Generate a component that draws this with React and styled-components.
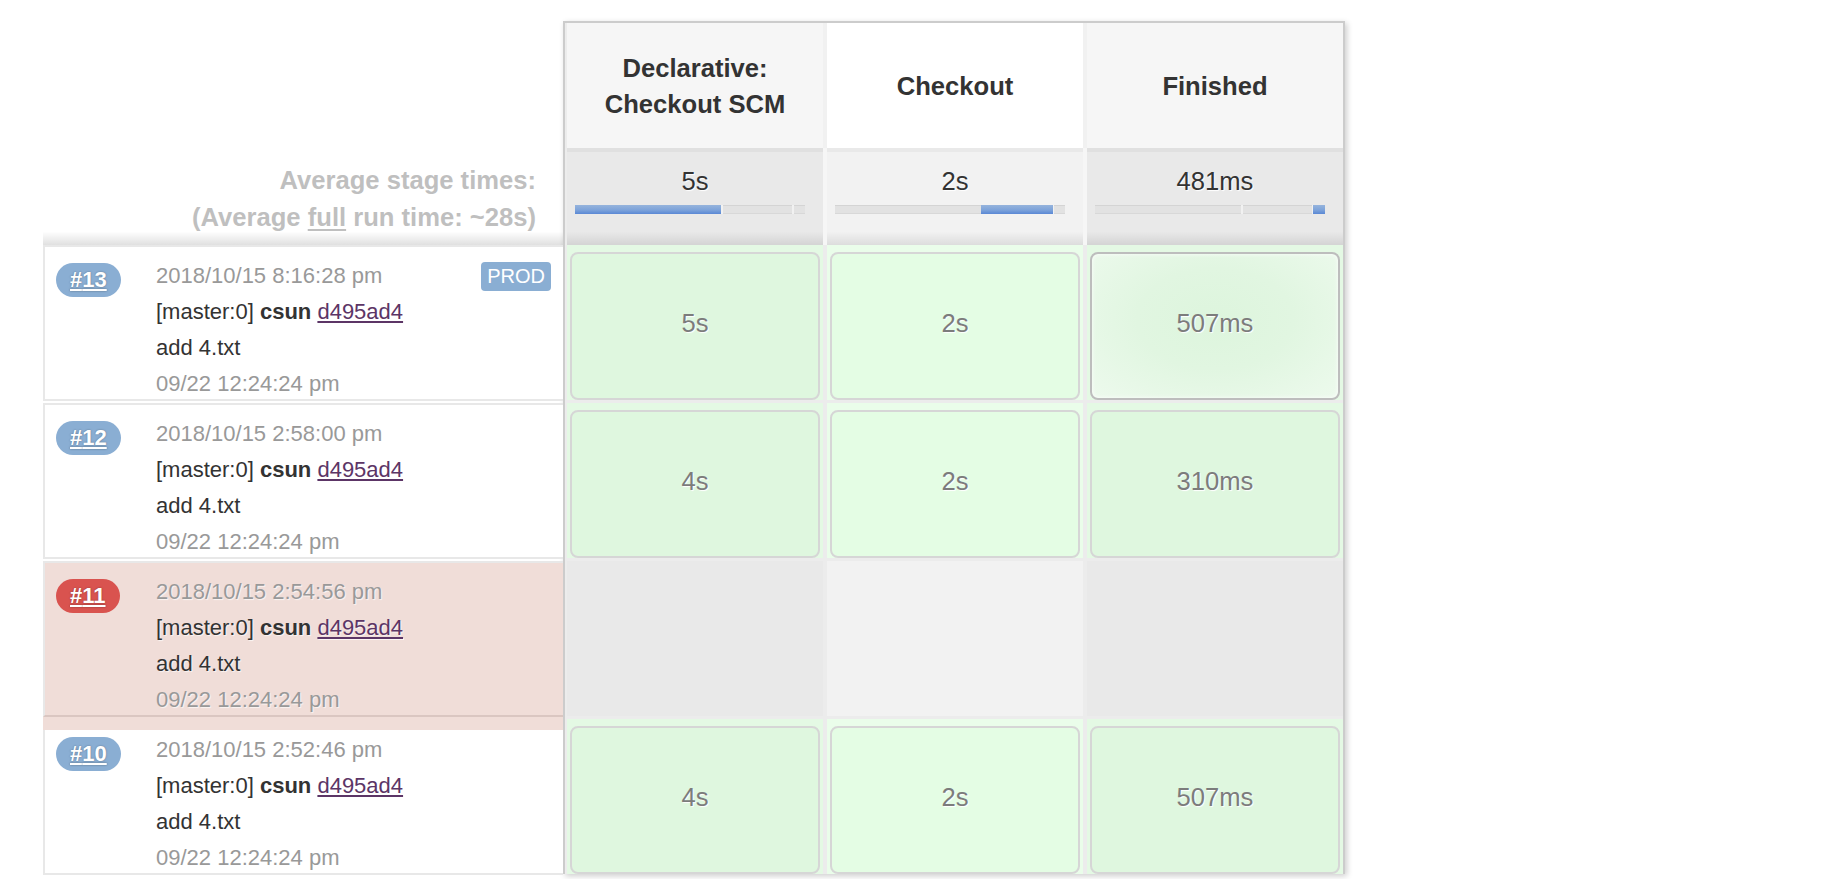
import React from 'react';
import styled, { createGlobalStyle, css } from 'styled-components';

const GlobalStyle = createGlobalStyle`
  html, body { margin: 0; padding: 0; background: #fff; overflow: hidden; }
  body { font-family: "Liberation Sans", Arial, Helvetica, sans-serif; color: #333; }
  * { box-sizing: border-box; }
`;

const Page = styled.div`
  display: flex;
  align-items: flex-start;
  padding: 21px 0 0 43px;
  height: 879px;
  overflow: hidden;
`;

/* ---------- left column ---------- */
const LeftCol = styled.div`
  flex: none;
  width: 520px;
  display: flex;
  flex-direction: column;
`;

const HeadSpacer = styled.div`
  height: 127px;
`;

const AvgLabel = styled.div`
  height: 97px;
  padding: 14px 27px 0 0;
  text-align: right;
  font-weight: bold;
  font-size: 25.6px;
  line-height: 37px;
  color: #bfbfbf;
  background: linear-gradient(to bottom, rgba(0,0,0,0) 86%, rgba(0,0,0,0.12) 100%);
  u { text-decoration-thickness: 2px; text-underline-offset: 3px; }
`;

const BuildRow = styled.div`
  position: relative;
  display: flex;
  height: 156px;
  margin-bottom: 2px;
  padding: 11px 12px 0 11px;
  border: 2px solid #e8e8e8;
  border-right: none;
  background: #fff;
  ${(p) =>
    p.$failed &&
    css`
      z-index: 1;
      background: #f0ddd8;
      border-bottom-color: #dac6c1;
      box-shadow: 0 13px 0 0 #f0ddd8;
    `}
`;

const BadgeCol = styled.div`
  flex: none;
  width: 100px;
  padding-top: 5px;
`;

const Badge = styled.a`
  display: inline-block;
  height: 34px;
  line-height: 34px;
  padding: 0 14px;
  border-radius: 17px;
  background: ${(p) => (p.$failed ? '#d9534f' : '#8aaed3')};
  color: #fff;
  font-weight: bold;
  font-size: 22px;
  text-decoration: underline;
  text-decoration-thickness: 2px;
  text-underline-offset: 2px;
  text-shadow: 0 0 2px rgba(0, 0, 0, 0.35);
  cursor: pointer;
`;

const Info = styled.div`
  flex: 1;
  display: flex;
  flex-direction: column;
  font-size: 22px;
  line-height: 36px;
  text-shadow: 1px 1px 1px rgba(255, 255, 255, 0.7);
`;

const InfoLine = styled.div`
  display: flex;
  align-items: center;
  justify-content: space-between;
  height: 36px;
  white-space: nowrap;
  color: ${(p) => (p.$muted ? '#999999' : '#333')};
`;

const Tag = styled.span`
  height: 29px;
  line-height: 29px;
  padding: 0 6px;
  border-radius: 4px;
  background: #8aaed3;
  color: #fff;
  font-size: 20px;
  text-shadow: none;
`;

const Author = styled.b`
  font-weight: bold;
`;

const CommitLink = styled.a`
  color: #5c3566;
  text-decoration: underline;
  text-underline-offset: 2px;
`;

/* ---------- stage table ---------- */
const Table = styled.div`
  flex: none;
  width: 782px;
  border: 2px solid #cccccc;
  border-bottom: none;
  padding-left: 2px;
  background: #ececec;
  box-shadow: 2px 2px 6px rgba(0, 0, 0, 0.2);
  display: flex;
  flex-direction: column;
`;

const Grid = styled.div`
  display: grid;
  grid-template-columns: repeat(3, 256px);
  column-gap: 4px;
`;

const HeadGrid = styled(Grid)`
  background: #f1f1f1;
`;

const HeadCell = styled.div`
  height: 125px;
  display: flex;
  align-items: center;
  justify-content: center;
  text-align: center;
  padding: 0 22px;
  font-weight: bold;
  font-size: 25.6px;
  line-height: 36px;
  color: #333;
  background: ${(p) => (p.$alt ? '#ffffff' : '#f6f6f6')};
`;

const AvgGrid = styled(Grid)`
  background: #f6f6f6;
`;

const AvgCell = styled.div`
  height: 97px;
  padding: 18px 18px 0 8px;
  text-align: center;
  background-color: ${(p) => (p.$alt ? '#f2f2f2' : '#e9e9e9')};
  background-image: linear-gradient(
    to bottom,
    rgba(0, 0, 0, 0.04) 0,
    rgba(0, 0, 0, 0.04) 4px,
    rgba(0, 0, 0, 0) 4px,
    rgba(0, 0, 0, 0) 86%,
    rgba(0, 0, 0, 0.09) 100%
  );
`;

const AvgValue = styled.div`
  font-size: 25.6px;
  line-height: 30px;
  color: #333;
  padding-left: 10px;
  text-shadow: 1px 1px 1px #fff;
`;

const Track = styled.div`
  position: relative;
  margin-top: 9px;
  height: 9px;
  background: #e2e2e2;
  box-shadow: inset 0 1px 0 #d4d4d4, inset 0 -1px 0 #d8d8d8;
`;

const Tick = styled.span`
  position: absolute;
  top: 0;
  bottom: 0;
  width: 2px;
  background: #f1f1f1;
`;

const Fill = styled.span`
  position: absolute;
  top: 0;
  bottom: 0;
  background: linear-gradient(to bottom, #96b4dc 0%, #7da3da 55%, #5a88d5 100%);
`;

const BodyGrid = styled(Grid)`
  grid-auto-rows: 155px;
  row-gap: 3px;
  background: #ececec;
`;

const StageCell = styled.div`
  padding: 7px 3px 0;
  background: ${(p) =>
    p.$state === 'empty'
      ? p.$alt
        ? '#f2f2f2'
        : '#e9e9e9'
      : p.$alt
      ? '#eafdea'
      : '#e4f9e4'};
`;

const Card = styled.div`
  height: 148px;
  display: flex;
  align-items: center;
  justify-content: center;
  padding-bottom: 5px;
  border: 2px solid #d6d6d6;
  border-radius: 8px;
  font-size: 25.6px;
  color: #7c7c7c;
  text-shadow: 1px 1px 1px #fff;
  background: ${(p) => (p.$alt ? '#e4fde4' : '#dff7df')};
  ${(p) =>
    p.$focus &&
    css`
      border-color: #bdbdbd;
      background: radial-gradient(ellipse at 50% 45%, #ddf5dd 0%, #e1f6e1 45%, #edfaed 100%);
      box-shadow: inset 0 0 4px rgba(255, 255, 255, 0.9);
    `}
`;

/* ---------- data ---------- */
const stages = ['Declarative: Checkout SCM', 'Checkout', 'Finished'];
const averages = [
  { label: '5s', from: 0, to: 63.5 },
  { label: '2s', from: 63.5, to: 94.8 },
  { label: '481ms', from: 94.8, to: 100 },
];
const ticks = [63.5, 94.3];

const builds = [
  { id: 13, date: '2018/10/15 8:16:28 pm', tag: 'PROD', times: ['5s', '2s', '507ms'], focus: 2 },
  { id: 12, date: '2018/10/15 2:58:00 pm', times: ['4s', '2s', '310ms'] },
  { id: 11, date: '2018/10/15 2:54:56 pm', failed: true, times: null },
  { id: 10, date: '2018/10/15 2:52:46 pm', times: ['4s', '2s', '507ms'] },
];

export default function App() {
  return (
    <>
      <GlobalStyle />
      <Page>
        <LeftCol>
          <HeadSpacer />
          <AvgLabel>
            Average stage times:
            <br />
            (Average <u>full</u> run time: ~28s)
          </AvgLabel>
          {builds.map((b) => (
            <BuildRow key={b.id} $failed={b.failed}>
              <BadgeCol>
                <Badge $failed={b.failed}>#{b.id}</Badge>
              </BadgeCol>
              <Info>
                <InfoLine $muted>
                  <span>{b.date}</span>
                  {b.tag && <Tag>{b.tag}</Tag>}
                </InfoLine>
                <InfoLine>
                  <span>
                    [master:0] <Author>csun</Author> <CommitLink>d495ad4</CommitLink>
                  </span>
                </InfoLine>
                <InfoLine>add 4.txt</InfoLine>
                <InfoLine $muted>09/22 12:24:24 pm</InfoLine>
              </Info>
            </BuildRow>
          ))}
        </LeftCol>

        <Table>
          <HeadGrid>
            {stages.map((s, i) => (
              <HeadCell key={s} $alt={i === 1}>
                {s}
              </HeadCell>
            ))}
          </HeadGrid>
          <AvgGrid>
            {averages.map((a, i) => (
              <AvgCell key={i} $alt={i === 1}>
                <AvgValue>{a.label}</AvgValue>
                <Track>
                  {ticks.map((t) => (
                    <Tick key={t} style={{ left: `${t}%` }} />
                  ))}
                  <Fill style={{ left: `${a.from}%`, width: `${a.to - a.from}%` }} />
                </Track>
              </AvgCell>
            ))}
          </AvgGrid>
          <BodyGrid>
            {builds.map((b) =>
              stages.map((s, i) => (
                <StageCell key={`${b.id}-${i}`} $alt={i === 1} $state={b.times ? 'ok' : 'empty'}>
                  {b.times && (
                    <Card $alt={i === 1} $focus={b.focus === i}>
                      {b.times[i]}
                    </Card>
                  )}
                </StageCell>
              ))
            )}
          </BodyGrid>
        </Table>
      </Page>
    </>
  );
}
